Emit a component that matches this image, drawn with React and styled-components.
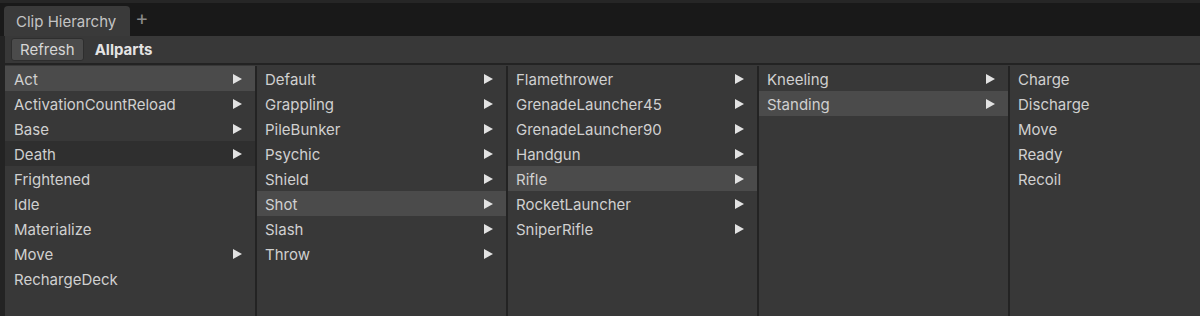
import React from 'react';
import styled, { createGlobalStyle } from 'styled-components';

const GlobalStyle = createGlobalStyle`
  html, body {
    margin: 0;
    padding: 0;
    background: #191919;
    height: 316px;
    overflow: hidden;
  }
  #root {
    height: 316px;
  }
`;

const Window = styled.div`
  height: 316px;
  display: flex;
  flex-direction: column;
  font-family: Inter, "Noto Sans", sans-serif;
  font-size: 15px;
  color: #d2d2d2;
  border-top: 3px solid #262626;
  box-sizing: border-box;
`;

const TabStrip = styled.div`
  height: 33px;
  display: flex;
  align-items: flex-end;
  padding-left: 4px;
  background: #191919;
`;

const Tab = styled.div`
  height: 30px;
  padding: 0 14px 0 12px;
  display: flex;
  align-items: center;
  background: #3a3a3a;
  border-radius: 4px 4px 0 0;
  color: #c4c4c4;
`;

const AddTab = styled.div`
  align-self: center;
  margin-left: 5px;
  margin-top: -3px;
  color: #8a8a8a;
  font-size: 20px;
  line-height: 1;
`;

const Body = styled.div`
  flex: 1;
  display: flex;
  flex-direction: column;
  border-left: 5px solid #232323;
  background: #383838;
  min-height: 0;
`;

const Toolbar = styled.div`
  height: 27px;
  display: flex;
  align-items: center;
  gap: 11px;
  padding-left: 6px;
  border-bottom: 2px solid #232323;
`;

const ToolButton = styled.div`
  height: 23px;
  padding: 0 8px;
  display: flex;
  align-items: center;
  background: #4b4b4b;
  border: 1px solid #2e2e2e;
  border-radius: 3px;
  color: #d6d6d6;
  box-sizing: border-box;
`;

const ToolLabel = styled.div`
  font-weight: 700;
  color: #e4e4e4;
`;

const Columns = styled.div`
  flex: 1;
  display: flex;
  min-height: 0;
  padding-top: 1px;
`;

const Column = styled.div`
  width: ${p => (p.$last ? 'auto' : p.$first ? '250px' : '249px')};
  flex: ${p => (p.$last ? '1' : 'none')};
  border-right: ${p => (p.$last ? 'none' : '2px solid #232323')};
  display: flex;
  flex-direction: column;
`;

const Row = styled.div`
  height: 25px;
  display: flex;
  align-items: center;
  justify-content: space-between;
  padding: 1px 13px 0 ${p => (p.$first ? '9px' : '8px')};
  box-sizing: border-box;
  background: ${p => (p.$state === 'selected' ? '#4b4b4b' : p.$state === 'hover' ? '#2f2f2f' : 'transparent')};
  color: #d0d0d0;
`;

const Arrow = () => (
  <svg width="9" height="10" viewBox="0 0 9 10">
    <polygon points="0,0 9,5 0,10" fill="#e2e2e2" />
  </svg>
);

const columns = [
  [
    { label: 'Act', sub: true, state: 'selected' },
    { label: 'ActivationCountReload', sub: true },
    { label: 'Base', sub: true },
    { label: 'Death', sub: true, state: 'hover' },
    { label: 'Frightened' },
    { label: 'Idle' },
    { label: 'Materialize' },
    { label: 'Move', sub: true },
    { label: 'RechargeDeck' },
  ],
  [
    { label: 'Default', sub: true },
    { label: 'Grappling', sub: true },
    { label: 'PileBunker', sub: true },
    { label: 'Psychic', sub: true },
    { label: 'Shield', sub: true },
    { label: 'Shot', sub: true, state: 'selected' },
    { label: 'Slash', sub: true },
    { label: 'Throw', sub: true },
  ],
  [
    { label: 'Flamethrower', sub: true },
    { label: 'GrenadeLauncher45', sub: true },
    { label: 'GrenadeLauncher90', sub: true },
    { label: 'Handgun', sub: true },
    { label: 'Rifle', sub: true, state: 'selected' },
    { label: 'RocketLauncher', sub: true },
    { label: 'SniperRifle', sub: true },
  ],
  [
    { label: 'Kneeling', sub: true },
    { label: 'Standing', sub: true, state: 'selected' },
  ],
  [
    { label: 'Charge' },
    { label: 'Discharge' },
    { label: 'Move' },
    { label: 'Ready' },
    { label: 'Recoil' },
  ],
];

export default function App() {
  return (
    <>
      <GlobalStyle />
      <Window>
        <TabStrip>
          <Tab>Clip Hierarchy</Tab>
          <AddTab>+</AddTab>
        </TabStrip>
        <Body>
          <Toolbar>
            <ToolButton>Refresh</ToolButton>
            <ToolLabel>Allparts</ToolLabel>
          </Toolbar>
          <Columns>
            {columns.map((items, i) => (
              <Column key={i} $first={i === 0} $last={i === columns.length - 1}>
                {items.map(item => (
                  <Row key={item.label} $first={i === 0} $state={item.state}>
                    <span>{item.label}</span>
                    {item.sub && <Arrow />}
                  </Row>
                ))}
              </Column>
            ))}
          </Columns>
        </Body>
      </Window>
    </>
  );
}
